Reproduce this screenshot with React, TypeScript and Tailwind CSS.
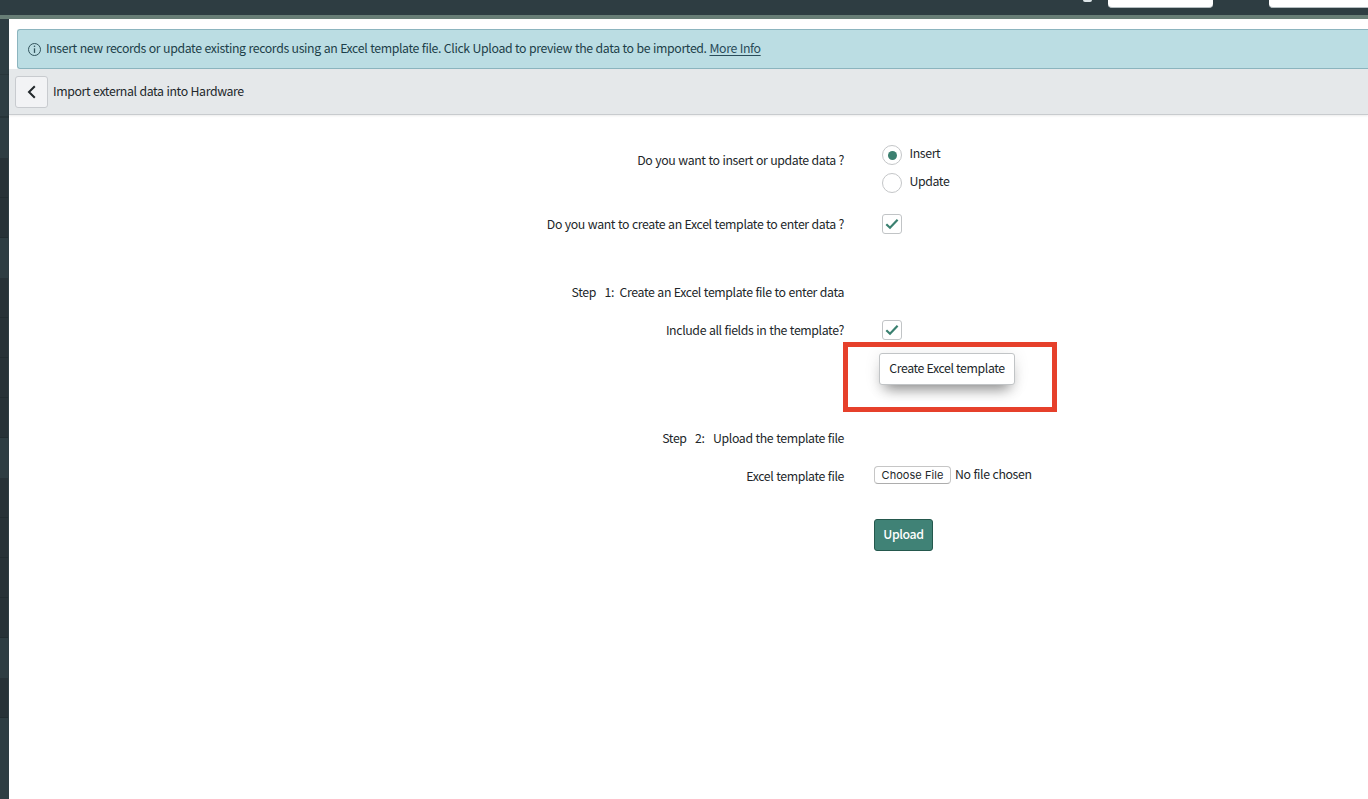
import { useState, type ReactNode } from "react";

type NavSegment = { id: number; dark: boolean; rows: number };

const NAV_SEGMENTS: NavSegment[] = [
  { id: 1, dark: false, rows: 1 },
  { id: 2, dark: true, rows: 2 },
  { id: 3, dark: false, rows: 1 },
  { id: 4, dark: true, rows: 4 },
  { id: 5, dark: false, rows: 1 },
  { id: 6, dark: true, rows: 4 },
  { id: 7, dark: false, rows: 1 },
  { id: 8, dark: true, rows: 1 },
];

function NavEdge() {
  return (
    <nav className="w-[9px] shrink-0 bg-[#2e3d42]">
      <div className="h-[56px] border-b border-[#29363a]" />
      <div className="h-[43px] border-b-2 border-[#273438]" />
      {NAV_SEGMENTS.map((segment) => (
        <div key={segment.id} className={segment.dark ? "mr-px bg-[#273237]" : ""}>
          {Array.from({ length: segment.rows }, (_, i) => (
            <div key={i} className={segment.dark ? "h-10 border-b border-[#212c30]" : "h-10"} />
          ))}
        </div>
      ))}
    </nav>
  );
}

function Row({ label, className, children }: { label?: string; className: string; children?: ReactNode }) {
  return (
    <div className={`grid grid-cols-[835px_1fr] ${className}`}>
      <div className="text-right whitespace-pre">{label}</div>
      <div>{children}</div>
    </div>
  );
}

function Radio({ label, checked, onChange }: { label: string; checked: boolean; onChange: () => void }) {
  return (
    <label className="flex h-5 gap-[7.5px]">
      <input type="radio" name="mode" checked={checked} onChange={onChange} className="sr-only" />
      <span className="flex size-5 items-center justify-center rounded-full border border-[#c4c6c8] bg-white">
        {checked ? <span className="size-[9px] rounded-full bg-[#3c8070]" /> : null}
      </span>
      <span className="-mt-0.5 leading-5">{label}</span>
    </label>
  );
}

function Checkbox({ checked, onChange }: { checked: boolean; onChange: () => void }) {
  return (
    <button type="button" role="checkbox" aria-checked={checked} onClick={onChange} className="ml-[38px] flex size-5 items-center justify-center rounded-[3px] border border-[#c1c4c6] bg-white">
      {checked ? (
        <svg width="14" height="12" viewBox="0 0 14 12" fill="none" stroke="#3a8070" strokeWidth="2.2">
          <path d="M1.3 6.2 5 9.7 12.6 1.8" />
        </svg>
      ) : null}
    </button>
  );
}

export default function App() {
  const [mode, setMode] = useState("insert");
  const [createTemplate, setCreateTemplate] = useState(true);
  const [allFields, setAllFields] = useState(true);

  return (
    <div className="flex h-[799px] w-[1368px] flex-col overflow-hidden bg-white font-['Noto_Sans_CJK_SC',sans-serif] text-[12.3px] leading-5 tracking-[-0.37px] text-[#22272a] [word-spacing:0.45px]">
      <header className="flex h-[19px] shrink-0 items-start border-b-4 border-[#687e76] bg-[#2e3d42] pl-[1083px]">
        <div className="h-[2px] w-[9px] rounded-b-sm bg-[#dce5e8]" />
        <div className="ml-4 h-2 w-[105px] rounded-b-[4px] border-b border-[#b5bec1] bg-white" />
        <div className="ml-14 h-2 flex-1 rounded-bl-[4px] border-b border-[#b5bec1] bg-white" />
      </header>

      <div className="flex min-h-0 flex-1">
        <NavEdge />
        <main className="min-w-0 flex-1">
          <div className="ml-2 mt-[10px] flex h-10 items-center rounded-l-[3px] border border-r-0 border-[#8cb5bf] bg-[#bbdde3] pl-[9px] text-[#1d3f49]">
            <svg width="15" height="15" viewBox="0 0 15 15" fill="none" stroke="#31535c">
              <circle cx="7.5" cy="7.5" r="6" />
              <path d="M7.5 6.3v4.6" strokeWidth="1.3" />
              <circle cx="7.5" cy="4.2" r=".8" fill="#31535c" stroke="none" />
            </svg>
            <p className="ml-1 pb-0.5 whitespace-nowrap">
              Insert new records or update existing records using an Excel template file. Click Upload to preview the data to be imported.{" "}
              <a href="#" className="text-[#2a4c5a] underline underline-offset-2">More Info</a>
            </p>
          </div>

          <div className="flex h-[46px] items-center border-b border-[#c8cbce] bg-[#e5e8ea] pl-[6px] shadow-[0_1px_2px_rgba(0,0,0,0.08)]">
            <button type="button" aria-label="Back" className="flex h-8 w-[33px] items-center justify-center rounded-[3px] border border-[#c8cbcf] bg-[#f2f3f5]">
              <svg width="10" height="14" viewBox="0 0 10 14" fill="none" stroke="#22282b" strokeWidth="2">
                <path d="M7.8 1.2 2 7 7.8 12.8" />
              </svg>
            </button>
            <h1 className="ml-[5px] pb-0.5">Import external data into Hardware</h1>
          </div>

          <form onSubmit={(e) => e.preventDefault()}>
            <div className="mt-[30px] grid grid-cols-[835px_1fr]">
              <div className="pt-[5px] text-right">Do you want to insert or update data ?</div>
              <div className="space-y-2 pl-[38px]">
                <Radio label="Insert" checked={mode === "insert"} onChange={() => setMode("insert")} />
                <Radio label="Update" checked={mode === "update"} onChange={() => setMode("update")} />
              </div>
            </div>
            <Row className="mt-[21px] h-5" label="Do you want to create an Excel template to enter data ?">
              <Checkbox checked={createTemplate} onChange={() => setCreateTemplate((v) => !v)} />
            </Row>
            <Row className="mt-[48px] h-5" label="Step   1:  Create an Excel template file to enter data" />
            <Row className="mt-[18px] h-5" label="Include all fields in the template?">
              <Checkbox checked={allFields} onChange={() => setAllFields((v) => !v)} />
            </Row>
            <Row className="mt-[13px] h-8">
              <div className="relative pl-[35px]">
                <button type="button" className="block h-8 w-[136px] rounded-[3px] border border-[#c1c4c6] bg-white pb-0.5 shadow-[0_10px_14px_-6px_rgba(0,0,0,0.42),0_2px_16px_rgba(0,0,0,0.1)]">
                  Create Excel template
                </button>
                <div className="pointer-events-none absolute -left-px -top-[11px] h-[70px] w-[214px] border-[5px] border-[#e6402b]" />
              </div>
            </Row>
            <Row className="mt-[43px] h-5" label="Step   2:   Upload the template file" />
            <Row className="mt-[18px] h-5" label="Excel template file">
              <div className="-mt-[2px] flex items-center pl-[30px]">
                <button type="button" className="mt-0.5 h-[18px] w-[77px] rounded-[4px] border border-[#c6c6c6] border-b-[#adadad] bg-white font-[Inter,sans-serif] text-[11px] leading-4 tracking-[0.05px]">
                  Choose File
                </button>
                <span className="ml-1">No file chosen</span>
              </div>
            </Row>
            <Row className="mt-[33px] h-8">
              <button type="submit" className="ml-[30px] block h-8 w-[59px] rounded-[3px] border border-[#24584d] bg-[#408276] pb-0.5 font-medium text-white">
                Upload
              </button>
            </Row>
          </form>
        </main>
      </div>
    </div>
  );
}
